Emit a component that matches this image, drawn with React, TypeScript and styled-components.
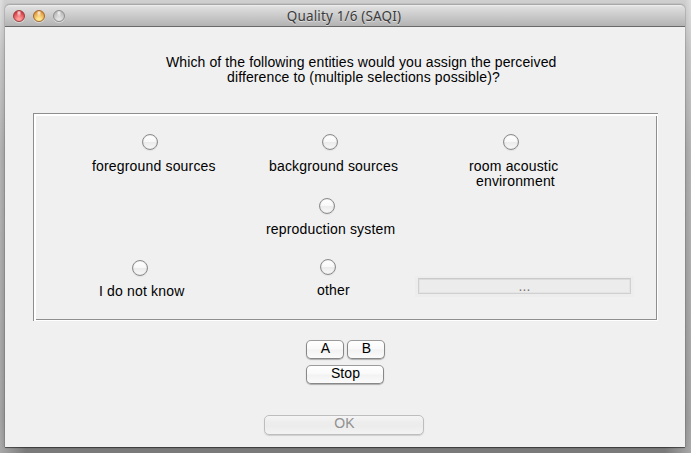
import React from "react";
import styled, { createGlobalStyle } from "styled-components";

const GlobalStyle = createGlobalStyle`
  * { box-sizing: border-box; }
  html, body { margin: 0; padding: 0; }
  body { overflow: hidden; font: 14px/15px "Liberation Sans", Arial, Helvetica, sans-serif; color: #000; }
`;

const Desktop = styled.main`
  width: 691px;
  height: 453px;
  padding: 4px 6px 6px 5px;
  background:
    linear-gradient(to right, #a8a8a8, #7a7a7a 26px, #7a7a7a 665px, #a8a8a8) 0 100% / 100% 6px no-repeat,
    linear-gradient(to right, rgba(255, 255, 255, 0.12), rgba(0, 0, 0, 0.06) 5px, rgba(0, 0, 0, 0.06) 685px, rgba(255, 255, 255, 0.12)),
    linear-gradient(to bottom, #dcdcdc 0, #c2c2c2 50px, #aaa 150px, #999 420px, #a0a0a0 453px);
`;

const Window = styled.section`
  display: flex;
  flex-direction: column;
  width: 680px;
  height: 443px;
  background: #f0f0f0;
  border-radius: 5px 5px 0 0;
  box-shadow: 0 0 1px rgba(0, 0, 0, 0.6), 0 1px 1px rgba(0, 0, 0, 0.5);
`;

const TitleBar = styled.header`
  display: grid;
  grid-template-columns: 1fr auto 1fr;
  align-items: center;
  height: 23px;
  padding: 0 8px;
  border-top: 1px solid #a9a9a9;
  border-bottom: 1px solid #696969;
  border-radius: 5px 5px 0 0;
  background: linear-gradient(#f0f0f0 0, #dedede 2px, #b3b3b3 100%);
`;

const Lights = styled.div`
  display: flex;
  gap: 8px;
`;

const Light = styled.i<{ $edge: string; $dark: string; $glow: string }>`
  width: 12px;
  height: 12px;
  border: 1px solid ${(p) => p.$edge};
  border-radius: 50%;
  background:
    radial-gradient(ellipse at 50% 18%, rgba(255, 255, 255, 0.85) 0, transparent 35%),
    radial-gradient(circle at 50% 85%, ${(p) => p.$glow} 15%, ${(p) => p.$dark} 90%);
  box-shadow: 0 1px 0 rgba(255, 255, 255, 0.45);
`;

const Title = styled.h1`
  margin: 0;
  padding-right: 2px;
  font: 400 13.5px/20px "Noto Sans", "Open Sans", sans-serif;
  letter-spacing: 0.15px;
  color: #3b3b3b;
  text-shadow: 0 1px 0 rgba(255, 255, 255, 0.5);
  white-space: nowrap;
`;

const Content = styled.div`
  display: flex;
  flex-direction: column;
  flex: 1;
  padding: 28px 27px 0 28px;
`;

const Text = styled.span<{ $spacing?: number; $indent?: number }>`
  display: block;
  margin-left: ${(p) => p.$indent ?? 0}px;
  letter-spacing: ${(p) => p.$spacing ?? 0.17}px;
  white-space: nowrap;
`;

const Question = styled.p`
  height: 58px;
  margin: 0;
  padding-left: 133px;
`;

const Panel = styled.div`
  width: 625px;
  height: 208px;
  padding: 21px 0 0 1px;
  background:
    linear-gradient(#8e8e8e, #8e8e8e) 0 0 / 625px 1px no-repeat,
    linear-gradient(#8e8e8e, #8e8e8e) 0 0 / 1px 208px no-repeat,
    linear-gradient(#fff, #fff) 1px 1px / 624px 2px no-repeat,
    linear-gradient(#fff, #fff) 1px 1px / 2px 207px no-repeat,
    linear-gradient(#8e8e8e, #8e8e8e) 623px 3px / 1px 204px no-repeat,
    linear-gradient(#8e8e8e, #8e8e8e) 3px 206px / 621px 1px no-repeat,
    linear-gradient(#fff, #fff) 624px 1px / 1px 207px no-repeat,
    linear-gradient(#fff, #fff) 1px 207px / 624px 1px no-repeat;
`;

const OptionRow = styled.div<{ $height: number }>`
  display: grid;
  grid-template-columns: 200px 180px 1fr;
  height: ${(p) => p.$height}px;
`;

const Option = styled.label<{ $left: number; $column?: number; $top?: number }>`
  grid-column: ${(p) => p.$column ?? "auto"};
  padding: ${(p) => p.$top ?? 0}px 0 0 ${(p) => p.$left}px;
`;

const Radio = styled.input.attrs({ type: "radio" })<{ $indent: number; $gap?: number }>`
  appearance: none;
  display: block;
  width: 16px;
  height: 16px;
  margin: 0 0 ${(p) => p.$gap ?? 9}px ${(p) => p.$indent}px;
  border: 1px solid #8b8b8b;
  border-radius: 50%;
  background: linear-gradient(#fff 0, #f8f8f8 48%, #ebebeb 52%, #f9f9f9 100%);
  box-shadow: inset 0 0 1px #aaa, 0 1px 1px rgba(0, 0, 0, 0.06);
`;

const FieldFrame = styled.div`
  width: 219px;
  height: 21px;
  margin: 17px 0 0 1px;
  padding: 2px 3px;
  background: #ededed;
`;

const Field = styled.div`
  display: flex;
  justify-content: center;
  height: 16px;
  border: 1px solid #d0d0d0;
  border-top-color: #cacaca;
  background: #ececec;
  box-shadow: inset 0 1px 0 #dcdcdc, inset 0 0 0 1px #e4e4e4;
  color: #777272;
  line-height: 15px;
  letter-spacing: 0.15px;
`;

const Controls = styled.div`
  display: flex;
  flex-wrap: wrap;
  gap: 6px 3px;
  width: 80px;
  margin: 19px 0 0 273px;
`;

const Button = styled.button<{ $width: number; $height?: number }>`
  display: flex;
  justify-content: center;
  flex: none;
  width: ${(p) => p.$width}px;
  height: ${(p) => p.$height ?? 19}px;
  padding: 0 0 0 1px;
  border: 1px solid #888;
  border-top-color: #9b9b9b;
  border-radius: 5px;
  background: linear-gradient(#fff 0, #f9f9f9 48%, #f2f2f2 52%, #fbfbfb 100%);
  box-shadow: 0 1px 1px rgba(0, 0, 0, 0.28);
  color: #000;
  font: inherit;
  letter-spacing: 0.1px;
  &:disabled {
    border-color: #bdbdbd;
    background: linear-gradient(#f5f5f5, #ededed 35%, #ececec 55%, #f3f3f3);
    box-shadow: 0 1px 1px rgba(0, 0, 0, 0.14);
    color: #909090;
  }
`;

const Footer = styled.footer`
  padding: 31px 0 0 231px;
`;

export default function App() {
  return (
    <>
      <GlobalStyle />
      <Desktop>
        <Window>
          <TitleBar>
            <Lights>
              <Light $edge="#a13c3c" $dark="#c92730" $glow="#ff9b98" />
              <Light $edge="#a3692c" $dark="#db8627" $glow="#ffe790" />
              <Light $edge="#8e8e8e" $dark="#b0b0b0" $glow="#e2e2e2" />
            </Lights>
            <Title>Quality 1/6 (SAQI)</Title>
          </TitleBar>
          <Content>
            <Question>
              <Text $spacing={0.11}>Which of the following entities would you assign the perceived</Text>
              <Text $spacing={0.12} $indent={61}>difference to (multiple selections possible)?</Text>
            </Question>
            <Panel>
              <OptionRow $height={64}>
                <Option $left={58}>
                  <Radio $indent={50} />
                  <Text>foreground sources</Text>
                </Option>
                <Option $left={35}>
                  <Radio $indent={53} />
                  <Text>background sources</Text>
                </Option>
                <Option $left={55}>
                  <Radio $indent={34} />
                  <Text>room acoustic</Text>
                  <Text $indent={7}>environment</Text>
                </Option>
              </OptionRow>
              <OptionRow $height={61}>
                <Option $column={2} $left={32}>
                  <Radio $indent={53} $gap={8} />
                  <Text>reproduction system</Text>
                </Option>
              </OptionRow>
              <OptionRow $height={60}>
                <Option $left={65} $top={1}>
                  <Radio $indent={33} $gap={8} />
                  <Text>I do not know</Text>
                </Option>
                <Option $left={83}>
                  <Radio $indent={3} $gap={8} />
                  <Text>other</Text>
                </Option>
                <FieldFrame>
                  <Field>...</Field>
                </FieldFrame>
              </OptionRow>
            </Panel>
            <Controls>
              <Button $width={38}>A</Button>
              <Button $width={38}>B</Button>
              <Button $width={78}>Stop</Button>
            </Controls>
            <Footer>
              <Button $width={160} $height={20} disabled>OK</Button>
            </Footer>
          </Content>
        </Window>
      </Desktop>
    </>
  );
}
